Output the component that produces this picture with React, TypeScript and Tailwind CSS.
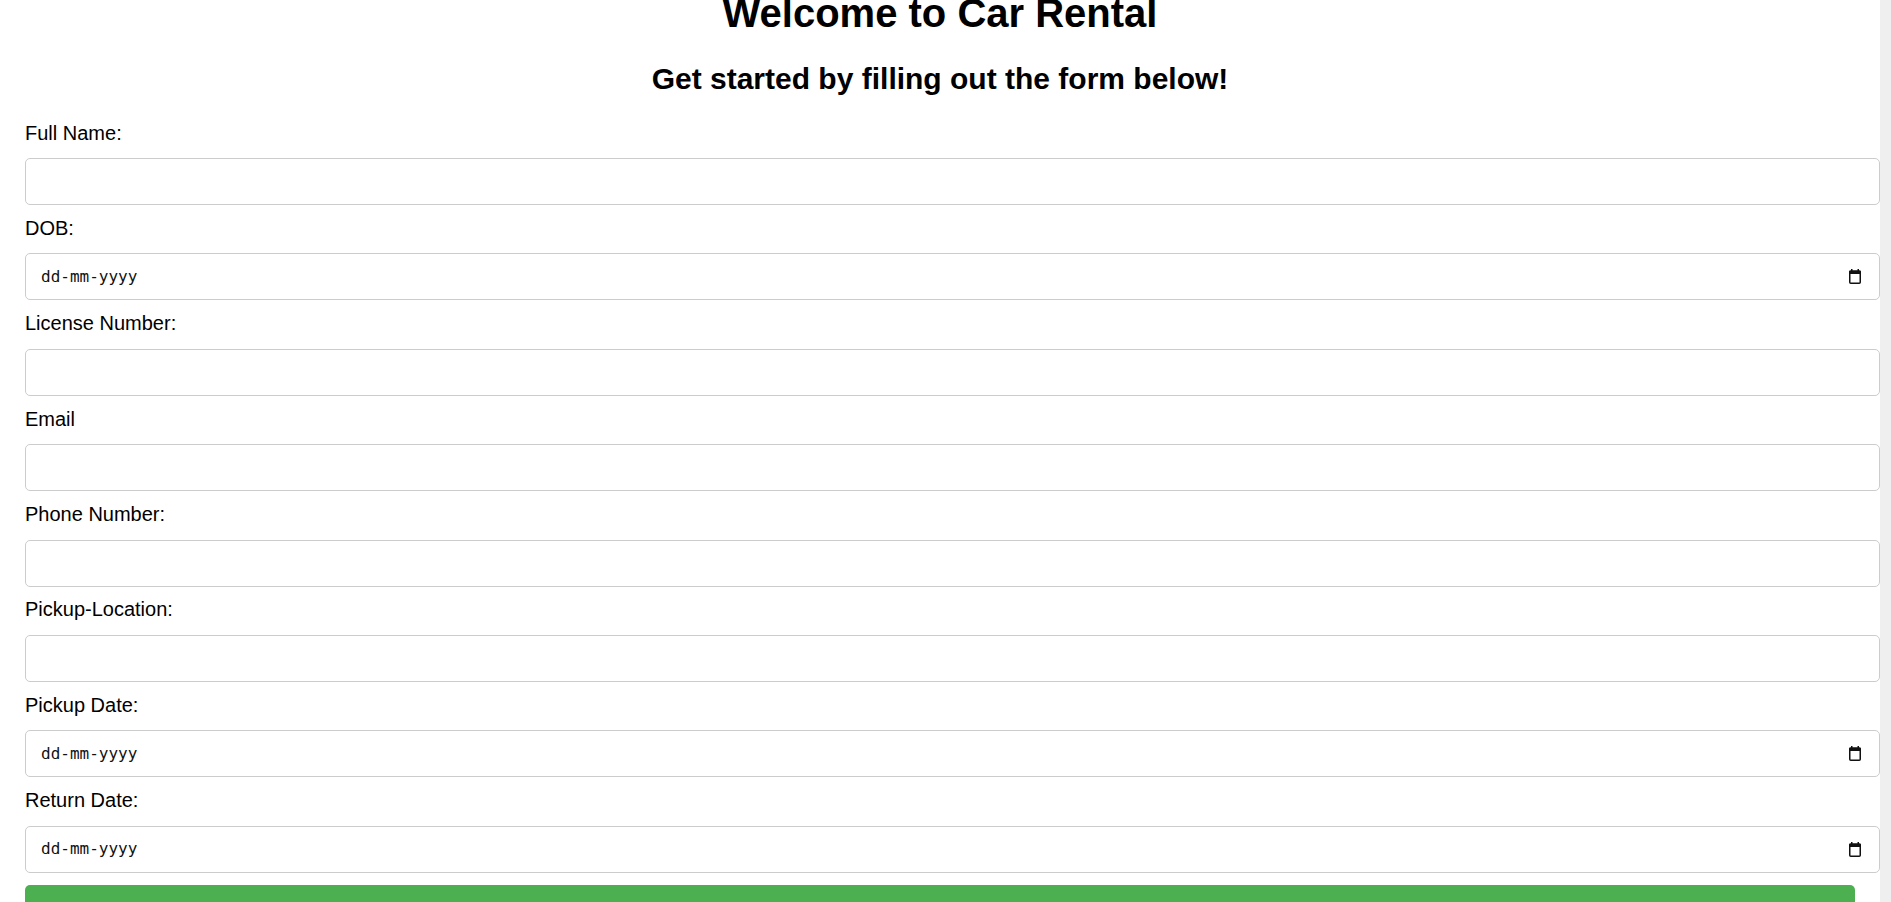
import React from 'react';

type Field = {
  label: string;
  kind: 'text' | 'date';
};

const fields: Field[] = [
  { label: 'Full Name:', kind: 'text' },
  { label: 'DOB:', kind: 'date' },
  { label: 'License Number:', kind: 'text' },
  { label: 'Email', kind: 'text' },
  { label: 'Phone Number:', kind: 'text' },
  { label: 'Pickup-Location:', kind: 'text' },
  { label: 'Pickup Date:', kind: 'date' },
  { label: 'Return Date:', kind: 'date' },
];

const CalendarIcon = () => (
  <svg width="12" height="15" viewBox="0 0 12 15" className="shrink-0">
    <rect x="2" y="0" width="1.5" height="2.5" fill="#111" />
    <rect x="8.5" y="0" width="1.5" height="2.5" fill="#111" />
    <rect x="0" y="1.5" width="12" height="3.5" rx="1" fill="#111" />
    <rect x="0.75" y="2.25" width="10.5" height="12" rx="1" fill="none" stroke="#111" strokeWidth="1.5" />
  </svg>
);

const App: React.FC = () => {
  return (
    <div className="h-screen flex overflow-hidden bg-white text-black font-['Liberation_Sans',Arial,sans-serif]">
      <main className="flex-1 min-w-0 overflow-hidden">
        <div className="px-[25px]">
          <h1 className="-mt-[10px] text-center text-[40px] leading-[46px] font-bold">Welcome to Car Rental</h1>
          <h2 className="mt-[25.5px] text-center text-[30px] leading-[34px] font-bold">Get started by filling out the form below!</h2>

          <form className="mt-[26px]" onSubmit={e => e.preventDefault()}>
            {fields.map(field => (
              <div key={field.label}>
                <label className="block text-[20px] leading-[23px] mb-[13.5px]">{field.label}</label>
                {field.kind === 'text' ? (
                  <input
                    type="text"
                    className="block w-[calc(100%+25px)] h-[47px] mb-[11.9px] px-[14px] bg-white border border-[#cccccc] rounded-[5px] text-[16px] outline-none"
                  />
                ) : (
                  <div className="flex items-center justify-between w-[calc(100%+25px)] h-[47px] mb-[11.9px] pl-[15px] pr-[18px] bg-white border border-[#cccccc] rounded-[5px]">
                    <span className="text-[16px] text-[#111] font-['DejaVu_Sans_Mono',monospace]">dd-mm-yyyy</span>
                    <CalendarIcon />
                  </div>
                )}
              </div>
            ))}

            <button
              type="submit"
              className="block w-full py-[15px] bg-[#4caf50] text-white text-[20px] leading-[23px] rounded-[5px]"
            >
              Submit
            </button>
          </form>
        </div>
      </main>
      <div className="w-[11px] shrink-0 bg-[#efefef]" />
    </div>
  );
};

export default App;
